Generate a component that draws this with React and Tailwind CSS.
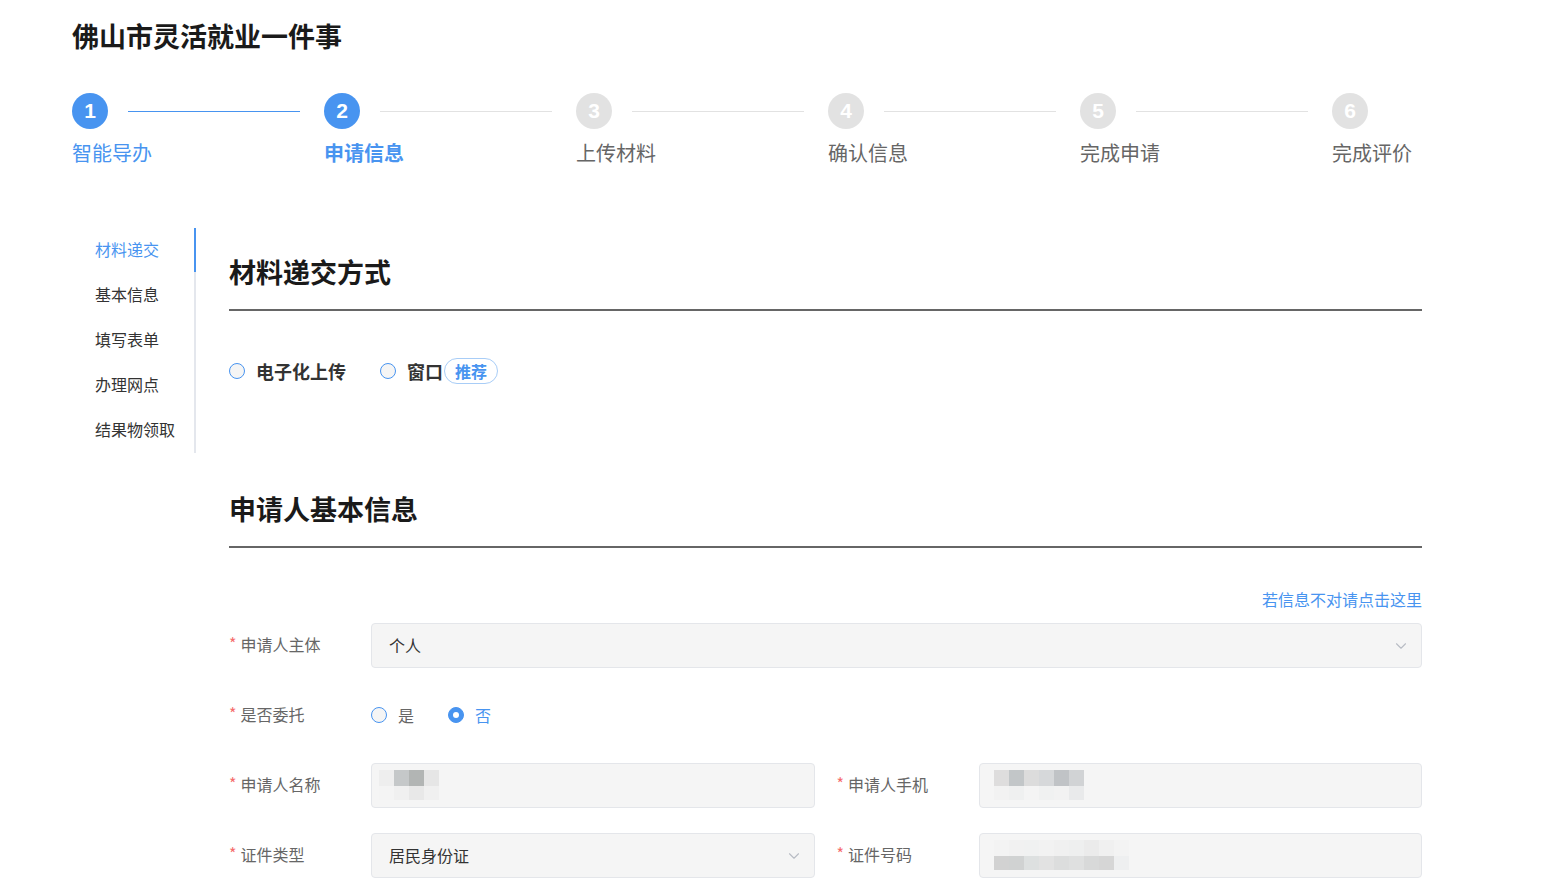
import { ChevronDown } from 'lucide-react';

const FONT = { fontFamily: '"Noto Sans CJK SC", "Noto Sans", sans-serif' };

const steps = ['智能导办', '申请信息', '上传材料', '确认信息', '完成申请', '完成评价'];
const navItems = ['材料递交', '基本信息', '填写表单', '办理网点', '结果物领取'];

const Stepper = () => (
  <div className="flex mt-[39px]">
    {steps.map((label, i) => {
      const done = i < 2;
      const current = i === 1;
      return (
        <div key={label} className={`shrink-0 ${i < steps.length - 1 ? 'w-[252px]' : 'w-[100px]'}`}>
          <div className="flex items-center h-[36px]">
            <div
              className={`w-[36px] h-[36px] rounded-full flex items-center justify-center text-white text-[21px] font-bold shrink-0 ${done ? 'bg-[#4894f0]' : 'bg-[#e2e2e2]'}`}
              style={{ fontFamily: '"Liberation Sans", Arial, sans-serif' }}
            >
              {i + 1}
            </div>
            {i < steps.length - 1 && (
              <div className={`flex-1 ml-[20px] mr-[24px] h-px ${i === 0 ? 'bg-[#4894f0]' : 'bg-[#e2e2e2]'}`} />
            )}
          </div>
          <div
            className={`mt-[10px] text-[20px] leading-[28px] whitespace-nowrap ${done ? 'text-[#4894f0]' : 'text-[#666]'} ${current ? 'font-bold' : ''}`}
          >
            {label}
          </div>
        </div>
      );
    })}
  </div>
);

const Radio = ({ checked }) => (
  <span
    className={`w-[16px] h-[16px] rounded-full border flex items-center justify-center shrink-0 ${checked ? 'bg-[#4894f0] border-[#4894f0]' : 'bg-[#f5f5f5] border-[#4894f0]'}`}
  >
    {checked && <span className="w-[6px] h-[6px] rounded-full bg-white" />}
  </span>
);

const SectionTitle = ({ children }) => (
  <div className="border-b-2 border-[#666] pb-[19px]">
    <h2 className="text-[27px] leading-[36px] font-bold text-[#1a1a1a]">{children}</h2>
  </div>
);

const Label = ({ children }) => (
  <div className="w-[142px] shrink-0 flex items-center pb-[3px] text-[16px] text-[#666]">
    <span className="text-[#f56c6c] text-[16px] leading-none mr-[4px] -mt-[3px]">*</span>
    {children}
  </div>
);

const Mosaic = ({ rows, cell = 15 }) => (
  <div className="flex flex-col">
    {rows.map((row, r) => (
      <div key={r} className="flex">
        {row.map((c, k) => (
          <div key={k} style={{ width: cell, height: r === 0 ? 16 : 14, background: c }} />
        ))}
      </div>
    ))}
  </div>
);

const Input = ({ children, select, className = '' }) => (
  <div className={`h-[45px] bg-[#f5f5f5] border border-[#e4e6ea] rounded-[4px] flex items-center pl-[17px] pr-[11px] text-[16px] text-[#333] ${className}`}>
    <div className="flex-1 flex items-center pb-[2px]">{children}</div>
    {select && <ChevronDown className="w-[18px] h-[18px] text-[#b8bcc4]" strokeWidth={1.5} />}
  </div>
);

export default function App() {
  return (
    <div className="min-h-screen bg-white" style={FONT}>
      <div className="pl-[72px] pt-[18px] w-[1422px]">
        <h1 className="text-[27px] leading-[36px] font-bold text-[#1a1a1a]">佛山市灵活就业一件事</h1>
        <Stepper />

        <div className="flex mt-[61px]">
          {/* side nav */}
          <div className="w-[124px] shrink-0 self-start border-r-2 border-[#e4e7ed]">
            {navItems.map((n, i) => (
              <div
                key={n}
                className={`h-[45px] flex items-center pl-[23px] pb-[4px] text-[16px] relative ${i === 0 ? 'text-[#4894f0]' : 'text-[#333]'}`}
              >
                {n}
                {i === 0 && <span className="absolute -right-[2px] top-0 h-[44px] w-[2px] bg-[#4894f0]" />}
              </div>
            ))}
          </div>

          {/* main */}
          <div className="flex-1 ml-[33px]">
            <div className="mt-[26px]">
              <SectionTitle>材料递交方式</SectionTitle>
            </div>
            <div className="flex items-center h-[26px] mt-[47px] text-[18px] font-bold text-[#333]">
              <Radio />
              <span className="ml-[11px]">电子化上传</span>
              <span className="ml-[34px]"><Radio /></span>
              <span className="ml-[11px]">窗口</span>
              <span className="ml-[1px] h-[26px] px-[10px] rounded-full border border-[#a8cdf7] text-[#4894f0] text-[16px] flex items-center">推荐</span>
            </div>

            <div className="mt-[107px]">
              <SectionTitle>申请人基本信息</SectionTitle>
            </div>

            <div className="flex justify-end mt-[40px] text-[16px] leading-[22px] text-[#4894f0]">若信息不对请点击这里</div>

            <div className="flex flex-col gap-[25px] mt-[13px]">
              <div className="flex h-[45px]">
                <Label>申请人主体</Label>
                <Input select className="flex-1">个人</Input>
              </div>

              <div className="flex h-[45px]">
                <Label>是否委托</Label>
                <div className="flex items-center pb-[2px] text-[16px]">
                  <Radio />
                  <span className="ml-[11px] text-[#666]">是</span>
                  <span className="ml-[34px]"><Radio checked /></span>
                  <span className="ml-[11px] text-[#4894f0]">否</span>
                </div>
              </div>

              <div className="grid grid-cols-2 gap-x-[22px]">
                <div className="flex h-[45px]">
                  <Label>申请人名称</Label>
                  <Input className="flex-1 !pl-[7px]">
                    <Mosaic
                      rows={[
                        ['#eeeeee', '#c5c8c9', '#b2b5b4', '#e6e6e6'],
                        ['#f4f4f4', '#f0f0f0', '#e8e8e8', '#f0f0f0'],
                      ]}
                    />
                  </Input>
                </div>
                <div className="flex h-[45px]">
                  <Label>申请人手机</Label>
                  <Input className="flex-1 !pl-[14px]">
                    <Mosaic
                      rows={[
                        ['#dedddd', '#c2c6c8', '#dcdcdc', '#d6d8da', '#c0c3c6', '#d1d3d5'],
                        ['#f2f2f2', '#eff0f0', '#f4f4f4', '#f0f1f1', '#f2f2f2', '#e9eaeb'],
                      ]}
                    />
                  </Input>
                </div>
              </div>

              <div className="grid grid-cols-2 gap-x-[22px]">
                <div className="flex h-[45px]">
                  <Label>证件类型</Label>
                  <Input select className="flex-1">居民身份证</Input>
                </div>
                <div className="flex h-[45px]">
                  <Label>证件号码</Label>
                  <Input className="flex-1 !pl-[14px]">
                    <Mosaic
                      cell={15}
                      rows={[
                        ['#f3f3f3', '#f1f1f1', '#f0f1f1', '#f2f2f2', '#f0f0f0', '#eeefef', '#ebebeb', '#f0f0f0', '#f3f3f3'],
                        ['#d2d2d2', '#d0d2d2', '#dde0e0', '#e2e2e2', '#dcdddd', '#dfe0e0', '#d8d9d9', '#d6d6d6', '#eeeff0'],
                      ]}
                    />
                  </Input>
                </div>
              </div>
            </div>
          </div>
        </div>
      </div>
    </div>
  );
}
